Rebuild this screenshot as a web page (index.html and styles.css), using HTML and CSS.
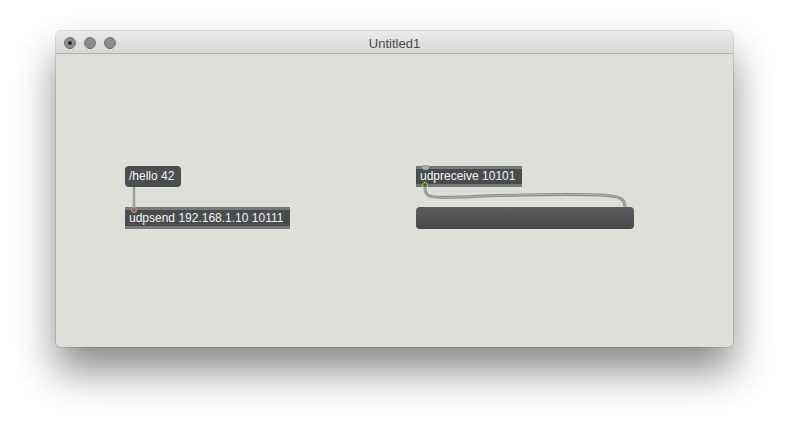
FILE: index.html
```html
<!DOCTYPE html>
<html>
<head>
<meta charset="utf-8">
<link rel="stylesheet" href="styles.css">
</head>
<body>
<div class="stage">
  <div class="window">
    <div class="titlebar">
      <div class="lights">
        <span class="light active"></span>
        <span class="light"></span>
        <span class="light"></span>
      </div>
      <div class="title">Untitled1</div>
    </div>
    <div class="canvas">
      <svg class="cords" width="677" height="293" viewBox="56 54 677 293">
        <line x1="134" y1="187" x2="134" y2="207" stroke="#9c9c9c" stroke-width="2.5"/>
        <path d="M425,188 C425,198 432,198 460,197 S560,193 600,195 C621,196 625,199 625,207" fill="none" stroke="#8e8e8e" stroke-width="3"/>
        <path d="M425,188 C425,198 432,198 460,197 S560,193 600,195 C621,196 625,199 625,207" fill="none" stroke="#b4b4b4" stroke-width="1"/>
      </svg>
      <div class="msg msg-hello">/hello 42</div>
      <div class="obj obj-send"><span class="inlet-pink"></span>udpsend 192.168.1.10 10111</div>
      <div class="obj obj-recv"><span class="knob"></span>udpreceive 10101<span class="outlet-yellow"></span></div>
      <div class="bar"></div>
    </div>
  </div>
</div>
</body>
</html>
```

FILE: styles.css
```css
html, body {
  margin: 0;
  padding: 0;
  background: #ffffff;
  width: 789px;
  height: 427px;
  overflow: hidden;
}
.stage {
  padding: 31px 0 0 56px;
}
.window {
  width: 677px;
  height: 316px;
  border-radius: 5px;
  overflow: hidden;
  background: #dfdfda;
  box-shadow: 0 24px 40px rgba(0, 0, 0, 0.46), 0 0 0 1px rgba(0, 0, 0, 0.12);
  display: flex;
  flex-direction: column;
}
.titlebar {
  height: 22px;
  flex: none;
  background: linear-gradient(#ebebeb, #d7d7d7);
  border-bottom: 1px solid #b3b3b3;
  display: flex;
  align-items: center;
  position: relative;
}
.lights {
  display: flex;
  gap: 8px;
  padding-left: 8px;
  padding-top: 2px;
}
.light {
  width: 10px;
  height: 10px;
  border-radius: 50%;
  background: #8c8c90;
  border: 1px solid #76767a;
  display: flex;
  align-items: center;
  justify-content: center;
}
.light.active::after {
  content: "";
  width: 4px;
  height: 4px;
  border-radius: 50%;
  background: #2a2a2e;
}
.title {
  position: absolute;
  left: 0;
  right: 0;
  top: 2px;
  line-height: 22px;
  text-align: center;
  font-family: "Liberation Sans", Arial, sans-serif;
  font-size: 13px;
  color: #4a4a4a;
}
.canvas {
  flex: 1;
  position: relative;
}
.cords {
  position: absolute;
  left: 0;
  top: 0;
}
.msg, .obj, .bar {
  position: absolute;
  box-sizing: border-box;
  font-family: "Liberation Sans", Arial, sans-serif;
  font-size: 12px;
  color: #f4f4f4;
  white-space: nowrap;
}
.msg {
  background: #4b4e50;
  border-radius: 4px;
  height: 21px;
  line-height: 21px;
  padding-left: 4px;
}
.msg-hello {
  left: 69px;
  top: 112px;
  width: 56px;
}
.obj {
  background: #494c4d;
  border-top: 3px solid #77797a;
  border-bottom: 3px solid #77797a;
  padding-left: 4px;
  line-height: 16px;
}
.obj-send {
  left: 69px;
  top: 153px;
  width: 165px;
  height: 22px;
}
.obj-recv {
  left: 360px;
  top: 112px;
  width: 106px;
  height: 21px;
  line-height: 15px;
}
.inlet-pink {
  position: absolute;
  left: 6px;
  top: -3px;
  width: 4px;
  height: 4px;
  border-radius: 50%;
  border: 1px solid #d58a88;
  background: #7a6a6a;
}
.knob {
  position: absolute;
  left: 6px;
  top: -4px;
  width: 7px;
  height: 5px;
  border-radius: 0 0 4px 4px;
  background: #a9aaab;
}
.outlet-yellow {
  position: absolute;
  left: 6px;
  bottom: -4px;
  width: 4px;
  height: 4px;
  border-radius: 50%;
  border: 1px solid #b9c840;
  background: #55584a;
}
.bar {
  left: 360px;
  top: 153px;
  width: 218px;
  height: 22px;
  border-radius: 4px;
  background: linear-gradient(#5b5d5f, #46484a);
}
```
